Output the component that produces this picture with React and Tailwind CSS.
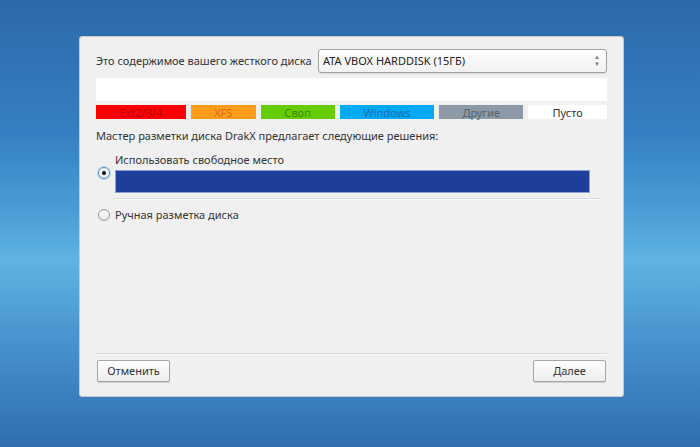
import React from 'react';

const legend = [
  { label: 'Ext2/3/4', w: 'w-[90px]', cls: 'bg-[#ff0000] text-[#b40000]' },
  { label: 'XFS', w: 'w-[65px]', cls: 'bg-[#ff9c1a] text-[#e0661a]' },
  { label: 'Своп', w: 'w-[74px]', cls: 'bg-[#66cc00] text-[#3c8c00]' },
  { label: 'Windows', w: 'w-[95px]', cls: 'bg-[#00aaf5] text-[#1f6cae]' },
  { label: 'Другие', w: 'w-[84px]', cls: 'bg-[#8c9aa8] text-[#56626e]' },
  { label: 'Пусто', w: 'w-[79px]', cls: 'bg-white text-[#333]' },
];

const Radio = ({ checked }) => (
  <span
    className={
      'flex h-[12px] w-[12px] shrink-0 items-center justify-center rounded-full border bg-gradient-to-b from-white to-[#e4e4e4] ' +
      (checked ? 'border-[#5b8fd0] shadow-[0_0_0_1px_#b8d2f0]' : 'border-[#9a9a9a]')
    }
  >
    {checked && <span className="h-[4px] w-[4px] rounded-full bg-[#111]" />}
  </span>
);

const Button = ({ children, w }) => (
  <button
    className={
      w +
      ' h-[22px] rounded-[2px] border border-[#a6a6a6] bg-gradient-to-b from-white to-[#ececec] text-[11px] text-[#333] shadow-[0_1px_1px_rgba(0,0,0,0.15)]'
    }
  >
    {children}
  </button>
);

export default function App() {
  return (
    <div
      className="h-[447px] w-[700px] overflow-hidden bg-[linear-gradient(180deg,#2c69a9_0%,#3580c2_30%,#4c9ed6_48%,#60b3e3_58%,#4590cc_78%,#2f6eae_100%)] pl-[79px] pt-[36px]"
      style={{ fontFamily: '"Noto Sans", "Open Sans", sans-serif' }}
    >
      <div className="flex h-[361px] w-[545px] flex-col rounded-[3px] border border-[#c9c9c9] bg-[#f0f0f0] px-[16px] pb-[14px] pt-[12px] text-[11px] text-[#333]">
        <div className="flex h-[24px] items-center justify-between">
          <span>Это содержимое вашего жесткого диска</span>
          <div className="flex h-[24px] w-[289px] items-center justify-between rounded-[3px] border border-[#a2a2a2] bg-gradient-to-b from-white to-[#f1f1f1] pl-[4px] pr-[6px] shadow-[0_1px_1px_rgba(0,0,0,0.1)]">
            <span className="text-[#222]">ATA VBOX HARDDISK (15ГБ)</span>
            <span className="flex flex-col items-center text-[6px] leading-[7px] text-[#777]">
              <span>▲</span>
              <span>▼</span>
            </span>
          </div>
        </div>

        <div className="mt-[5px] h-[23px] w-full bg-white" />

        <div className="mt-[4px] flex h-[14px] gap-[5px]">
          {legend.map((l) => (
            <div
              key={l.label}
              className={l.w + ' ' + l.cls + ' h-[14px] pt-[1px] text-center text-[11px] leading-[14px]'}
            >
              {l.label}
            </div>
          ))}
        </div>

        <div className="mt-[10px] leading-[14px]">Мастер разметки диска DrakX предлагает следующие решения:</div>

        <div className="mt-[10px] flex items-center gap-[5px] pl-[2px]">
          <Radio checked />
          <div className="flex flex-col">
            <span className="leading-[14px]">Использовать свободное место</span>
            <div className="mt-[3px] h-[23px] w-[475px] border border-[#8aa0d8] bg-[#1e3f99]" />
          </div>
        </div>

        <div className="ml-[19px] mt-[5px] h-[2px] w-[486px] border-t border-[#dadada] bg-white/70" />

        <div className="mt-[7px] flex items-center gap-[5px] pl-[2px]">
          <Radio />
          <span>Ручная разметка диска</span>
        </div>

        <div className="flex-1" />

        <div className="h-[2px] w-full border-t border-[#d8d8d8] bg-white/70" />

        <div className="mt-[5px] flex items-center justify-between px-[1px]">
          <Button w="w-[73px]">Отменить</Button>
          <Button w="w-[73px]">Далее</Button>
        </div>
      </div>
    </div>
  );
}
